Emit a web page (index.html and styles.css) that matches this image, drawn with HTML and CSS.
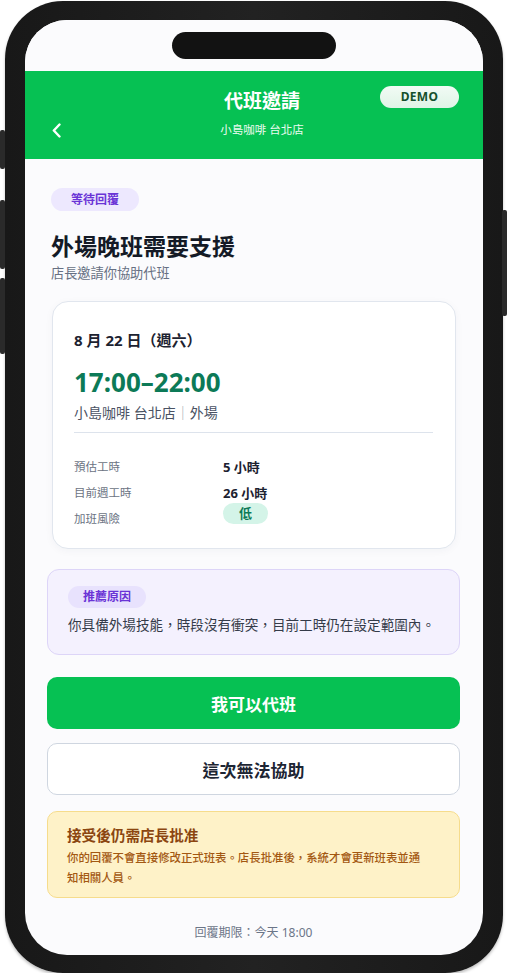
FILE: index.html
```html
<!DOCTYPE html>
<html lang="zh-Hant">
<head>
  <meta charset="UTF-8" />
  <meta name="viewport" content="width=device-width, initial-scale=1.0" />
  <title>代班邀請</title>
  <link rel="stylesheet" href="styles.css">
</head>
<body>
  <div class="phone">
    <span class="side-btn side-mute"></span>
    <span class="side-btn side-vol-up"></span>
    <span class="side-btn side-vol-down"></span>
    <span class="side-btn side-power"></span>

    <div class="screen">
      <div class="status-area">
        <div class="notch"></div>
      </div>

      <div class="app-header">
        <div class="header-title">代班邀請</div>
        <button class="back-btn" aria-label="返回">
          <svg width="9" height="15" viewBox="0 0 9 15"><polyline points="7.5,1.5 1.8,7.5 7.5,13.5" fill="none" stroke="#fff" stroke-width="2.4" stroke-linecap="round" stroke-linejoin="round"/></svg>
        </button>
        <div class="header-sub">小島咖啡 台北店</div>
        <span class="demo-badge">DEMO</span>
      </div>

      <div class="content">
        <div class="intro">
          <span class="status-badge">等待回覆</span>
          <h1 class="page-title">外場晚班需要支援</h1>
          <p class="page-sub">店長邀請你協助代班</p>
        </div>

        <div class="shift-card">
          <div class="shift-date">8 月 22 日（週六）</div>
          <div class="shift-time">17:00–22:00</div>
          <div class="shift-place">小島咖啡 台北店<span class="sep">｜</span>外場</div>
          <div class="divider"></div>
          <div class="info-grid">
            <div class="info-label">預估工時</div>
            <div class="info-value">5 小時</div>
            <div class="info-label">目前週工時</div>
            <div class="info-value">26 小時</div>
            <div class="info-label">加班風險</div>
            <div class="info-value"><span class="risk-pill">低</span></div>
          </div>
        </div>

        <div class="reason-box">
          <span class="reason-tag">推薦原因</span>
          <p class="reason-text">你具備外場技能，時段沒有衝突，目前工時仍在設定範圍內。</p>
        </div>

        <button class="btn btn-accept">我可以代班</button>
        <button class="btn btn-decline">這次無法協助</button>

        <div class="notice-box">
          <div class="notice-title">接受後仍需店長批准</div>
          <p class="notice-text">你的回覆不會直接修改正式班表。店長批准後，系統才會更新班表並通知相關人員。</p>
        </div>

        <div class="deadline">回覆期限：今天 18:00</div>
      </div>
    </div>
  </div>
</body>
</html>
```

FILE: styles.css
```css
* {
  box-sizing: border-box;
}
body {
  margin: 0;
  background-color: #ffffff;
  font-family: "Noto Sans", "Noto Sans CJK TC", sans-serif;
  color: #1f2430;
}
.phone {
  position: relative;
  width: 498px;
  height: 972px;
  margin: 1px 0 0 5px;
  padding: 19px 20px 17px 20px;
  background: linear-gradient(90deg, #181818, #222 50%, #181818);
  border-radius: 58px;
  box-shadow: 0 2px 3px rgba(0, 0, 0, 0.25);
}
.side-btn {
  position: absolute;
  width: 5px;
  background-color: #2a2a2a;
  border-radius: 2px;
}
.side-mute {
  left: -5px;
  top: 129px;
  height: 39px;
}
.side-vol-up {
  left: -5px;
  top: 199px;
  height: 69px;
}
.side-vol-down {
  left: -5px;
  top: 277px;
  height: 76px;
}
.side-power {
  right: -4px;
  top: 209px;
  height: 106px;
}
.screen {
  width: 458px;
  height: 935px;
  background-color: #fbfbfd;
  border-radius: 42px;
  overflow: hidden;
}
.status-area {
  height: 51px;
  display: flex;
  justify-content: center;
  padding-top: 12px;
  background-color: #fbfbfd;
}
.notch {
  width: 164px;
  height: 27px;
  background-color: #121212;
  border-radius: 14px;
}

/* header */
.app-header {
  position: relative;
  height: 88px;
  background-color: #06c153;
  display: grid;
  grid-template-columns: 60px 1fr 44px;
  grid-template-rows: 28px 18px;
  row-gap: 6px;
  padding-top: 16px;
  color: #fff;
}
.header-title {
  grid-column: 2;
  grid-row: 1;
  text-align: center;
  font-size: 19px;
  font-weight: 700;
  line-height: 28px;
}
.back-btn {
  grid-column: 1;
  grid-row: 2;
  background: none;
  border: none;
  padding: 0 0 0 27px;
  display: flex;
  align-items: center;
  cursor: pointer;
}
.header-sub {
  grid-column: 2;
  grid-row: 2;
  text-align: center;
  font-size: 11.5px;
  line-height: 18px;
  color: #eafbf0;
}
.demo-badge {
  position: absolute;
  top: 15px;
  right: 24px;
  width: 79px;
  height: 22px;
  border-radius: 11px;
  background: linear-gradient(180deg, #f2fbf5, #dff4e6);
  color: #14502c;
  font-size: 12px;
  font-weight: 700;
  line-height: 22px;
  text-align: center;
  letter-spacing: 0.3px;
}

/* content */
.content {
  padding: 28px 23px 0 22px;
}
.intro {
  padding-left: 4px;
}
.status-badge {
  display: inline-block;
  height: 23px;
  padding: 0 20px;
  border-radius: 12px;
  background-color: #ede8fe;
  color: #6a34d6;
  font-size: 12px;
  font-weight: 700;
  line-height: 23px;
}
.page-title {
  margin: 19px 0 0;
  font-size: 23px;
  font-weight: 700;
  line-height: 32px;
  color: #141a26;
}
.page-sub {
  margin: 1px 0 0;
  font-size: 13.2px;
  line-height: 20px;
  color: #677083;
}

.shift-card {
  margin: 18px 4px 0 5px;
  padding: 26px 22px 17px 21px;
  background-color: #fff;
  border: 1px solid #e1e6ee;
  border-radius: 16px;
  box-shadow: 0 2px 8px rgba(30, 40, 70, 0.04);
}
.shift-date {
  font-size: 15px;
  font-weight: 700;
  line-height: 24px;
  color: #1c2230;
}
.shift-time {
  margin-top: 13px;
  font-size: 26px;
  font-weight: 700;
  line-height: 34px;
  color: #0c7a57;
}
.shift-place {
  margin-top: 4px;
  font-size: 14px;
  line-height: 20px;
  color: #4a5263;
}
.sep {
  color: #a3abb8;
}
.divider {
  margin-top: 9px;
  height: 1px;
  background-color: #dde3ec;
}
.info-grid {
  margin-top: 20px;
  display: grid;
  grid-template-columns: 149px 1fr;
  grid-auto-rows: 26px;
  align-items: center;
}
.info-label {
  font-size: 11.5px;
  color: #6b7383;
}
.info-value {
  font-size: 13px;
  font-weight: 700;
  color: #1c2230;
}
.risk-pill {
  display: inline-block;
  width: 45px;
  height: 21px;
  margin-top: -6px;
  border-radius: 11px;
  background-color: #d4f4e8;
  color: #0c7a57;
  text-align: center;
  line-height: 21px;
  vertical-align: top;
}

.reason-box {
  margin-top: 20px;
  padding: 14px 20px 19px;
  background-color: #f4f1fe;
  border: 1px solid #ddd5f8;
  border-radius: 12px;
}
.reason-tag {
  display: inline-block;
  height: 22px;
  padding: 0 15px;
  border-radius: 11px;
  background-color: #e8e2fd;
  color: #6a34d6;
  font-size: 12px;
  font-weight: 700;
  line-height: 22px;
}
.reason-text {
  margin: 7px 0 0;
  font-size: 13.6px;
  line-height: 20px;
  color: #343b49;
  white-space: nowrap;
}

.btn {
  display: block;
  width: 100%;
  height: 52px;
  border-radius: 10px;
  font-family: inherit;
  font-size: 17px;
  font-weight: 700;
  cursor: pointer;
}
.btn-accept {
  margin-top: 22px;
  background-color: #06c153;
  border: none;
  color: #fff;
}
.btn-decline {
  margin-top: 14px;
  background-color: #fff;
  border: 1px solid #cfd6e0;
  color: #1d2533;
}

.notice-box {
  margin-top: 16px;
  padding: 12px 30px 9px 19px;
  background-color: #fef2c8;
  border: 1px solid #f6dc8c;
  border-radius: 10px;
}
.notice-title {
  font-size: 14.6px;
  font-weight: 700;
  line-height: 22px;
  color: #8b4610;
}
.notice-text {
  margin: 2px 0 0;
  font-size: 11.4px;
  font-weight: 500;
  line-height: 20px;
  color: #a35812;
}

.deadline {
  margin-top: 26px;
  text-align: center;
  font-size: 12px;
  line-height: 18px;
  color: #6b7588;
}
```
